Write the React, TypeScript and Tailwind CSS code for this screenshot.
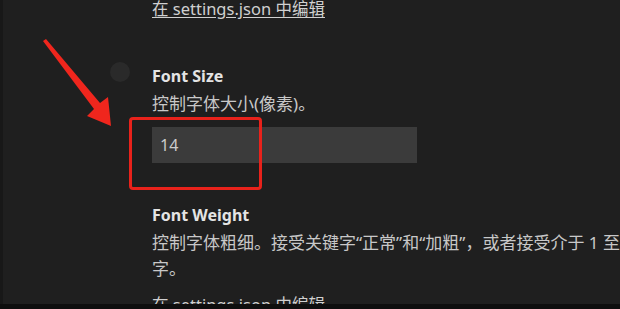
import React from "react";

const font = { fontFamily: '"Noto Sans", "Noto Sans CJK SC", sans-serif' };

export default function App() {
  return (
    <div
      className="relative flex h-[309px] w-[620px] flex-col overflow-hidden bg-[#1f1f1f]"
      style={font}
    >
      <div className="flex min-h-0 flex-1">
        <div className="w-[3px] shrink-0 bg-[#181818]" />
        <div className="relative min-w-0 flex-1 overflow-hidden pl-[149px]">
          <div className="-mt-[4px] flex flex-col text-[16px] leading-[26px]">
            <a className="w-fit whitespace-nowrap text-[16.5px] text-[#d0d0d0] underline underline-offset-[2px]">
              在 settings.json 中编辑
            </a>

            <div className="mt-[42px] font-bold leading-[24px] text-[#e4e4e4]">Font Size</div>
            <div className="mt-[3px] whitespace-nowrap text-[17px] text-[#c8c8c8]">控制字体大小(像素)。</div>
            <div className="mt-[10px] flex h-[36px] w-[265px] items-center bg-[#3b3b3b] pl-[8px] text-[16px] text-[#cccccc]">
              14
            </div>

            <div className="mt-[40px] font-bold leading-[24px] text-[#e4e4e4]">Font Weight</div>
            <div className="mt-[3px] whitespace-nowrap text-[17px] text-[#c8c8c8]">
              控制字体粗细。接受关键字“正常”和“加粗”，或者接受介于 1 至 1000 之间的数
              <br />
              字。
            </div>
            <a className="mt-[10px] w-fit whitespace-nowrap text-[16.5px] text-[#d0d0d0] underline underline-offset-[2px]">
              在 settings.json 中编辑
            </a>
          </div>
        </div>
      </div>
      <div className="h-[5px] shrink-0 bg-[#0e0e0e]" />

      {/* gear hover circle */}
      <div className="absolute left-[110px] top-[62px] h-[20px] w-[20px] rounded-full bg-[#2a2a2a]" />

      {/* red highlight box */}
      <div className="absolute left-[129px] top-[117px] h-[73px] w-[133px] rounded-[4px] border-[3px] border-[#e8221b]" />

      {/* red arrow */}
      <svg className="absolute left-0 top-0" width="620" height="309" viewBox="0 0 620 309">
        <polygon
          points="43,41 46,39 100,103 108,97 111,126 87,116 94,109"
          fill="#f0261d"
        />
      </svg>
    </div>
  );
}
